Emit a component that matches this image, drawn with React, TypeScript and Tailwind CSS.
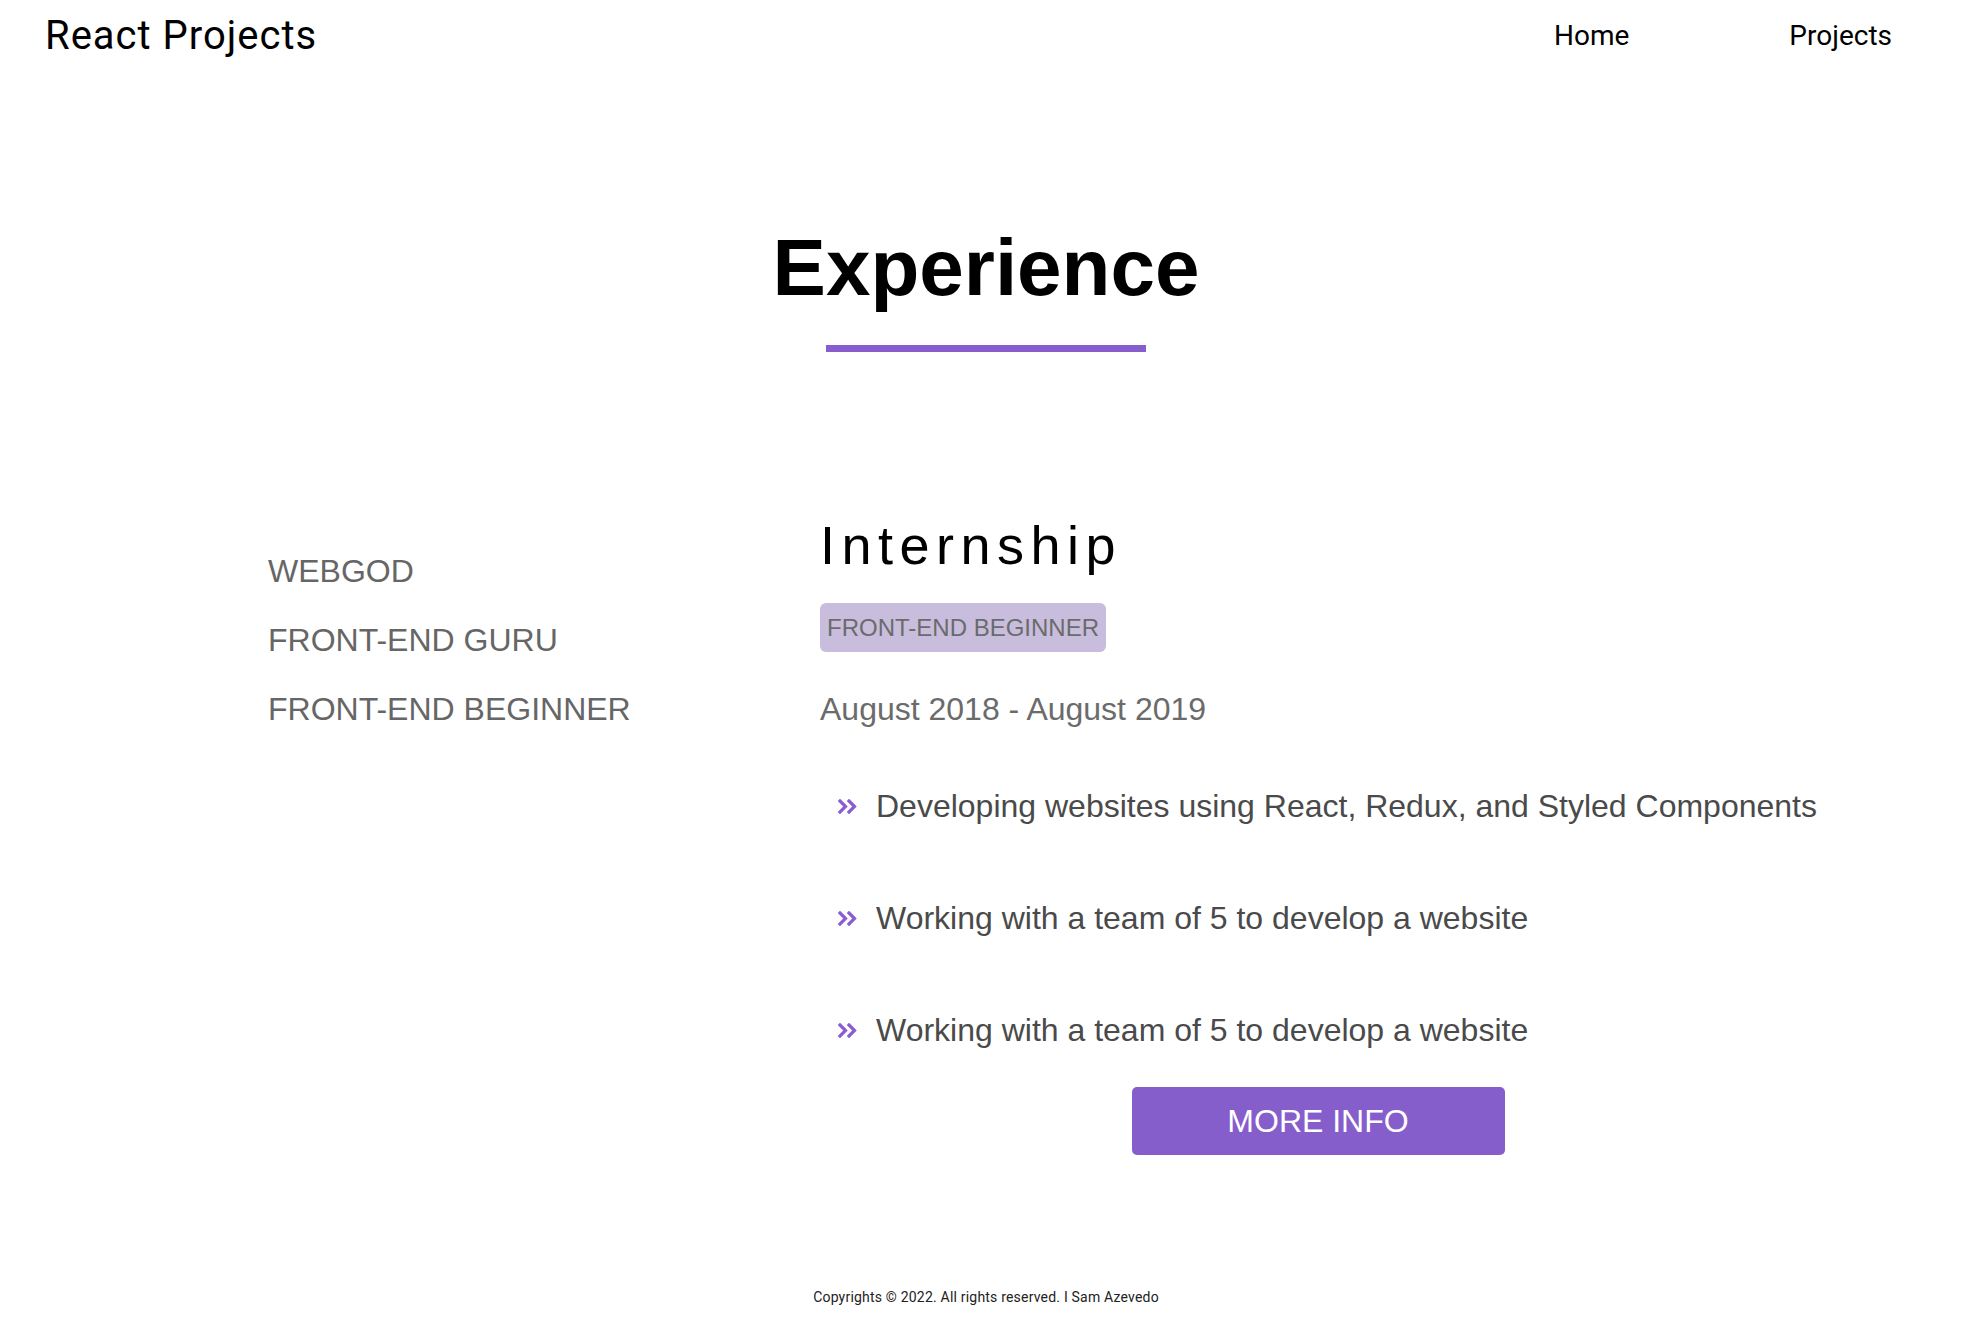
import type { ReactNode } from "react";

const arial = "font-['Liberation_Sans',Arial,sans-serif]";
const techy = "font-['Roboto','Liberation_Sans',sans-serif]";

function Chevrons() {
  return (
    <svg width="19" height="15" viewBox="0 0 19 15" className="shrink-0">
      <path d="M2 2 L7.5 7.5 L2 13" fill="none" stroke="#8a5cd3" strokeWidth="3.2" strokeLinecap="square" strokeLinejoin="miter" />
      <path d="M11 2 L16.5 7.5 L11 13" fill="none" stroke="#8a5cd3" strokeWidth="3.2" strokeLinecap="square" strokeLinejoin="miter" />
    </svg>
  );
}

function Bullet({ children }: { children: ReactNode }) {
  return (
    <li className="flex items-center h-[32px] pl-[18px]">
      <Chevrons />
      <span className="ml-[19px] text-[32px] leading-none text-[#4a4a4a] whitespace-nowrap">{children}</span>
    </li>
  );
}

export default function App() {
  return (
    <div className={`w-full min-h-[1326px] bg-white flex flex-col ${arial}`}>
      <header className={`flex items-center justify-between h-[72px] pl-[45px] pr-[80px] ${techy}`}>
        <p className="text-[40px] leading-none text-black tracking-[1px]">React Projects</p>
        <nav className="flex gap-[160px] text-[28px] leading-none text-black">
          <a>Home</a>
          <a>Projects</a>
        </nav>
      </header>

      <section className="flex flex-col items-center pt-[156px]">
        <h1 className="text-[80px] font-bold leading-none text-black">Experience</h1>
        <div className="mt-[37px] w-[320px] h-[7px] bg-[#875ecd]" />
      </section>

      <section className="flex pl-[268px] mt-[166px]">
        <ul className="w-[552px] pt-[37px] flex flex-col gap-[37px] text-[32px] leading-none text-[#666666]">
          <li>WEBGOD</li>
          <li>FRONT-END GURU</li>
          <li>FRONT-END BEGINNER</li>
        </ul>

        <div className="w-[996px] flex flex-col">
          <h2 className="text-[54px] leading-none tracking-[6.5px] text-black">Internship</h2>
          <div className="mt-[31px] self-start h-[49px] flex items-center px-[7px] rounded-[6px] bg-[#c8bddc] text-[24px] leading-none text-[#6b6b6b]">
            FRONT-END BEGINNER
          </div>
          <p className="mt-[41px] text-[32px] leading-none text-[#6b6b6b]">August 2018 - August 2019</p>
          <ul className="mt-[65px] flex flex-col gap-[80px]">
            <Bullet>Developing websites using React, Redux, and Styled Components</Bullet>
            <Bullet>Working with a team of 5 to develop a website</Bullet>
            <Bullet>Working with a team of 5 to develop a website</Bullet>
          </ul>
          <button className="mt-[41px] self-center w-[373px] h-[68px] rounded-[5px] bg-[#865ecc] text-white text-[32px] leading-none">
            MORE INFO
          </button>
        </div>
      </section>

      <footer className={`mt-[135px] text-center text-[14px] leading-none tracking-[0.2px] text-[#222] ${techy}`}>
        Copyrights © 2022. All rights reserved. I Sam Azevedo
      </footer>
    </div>
  );
}
